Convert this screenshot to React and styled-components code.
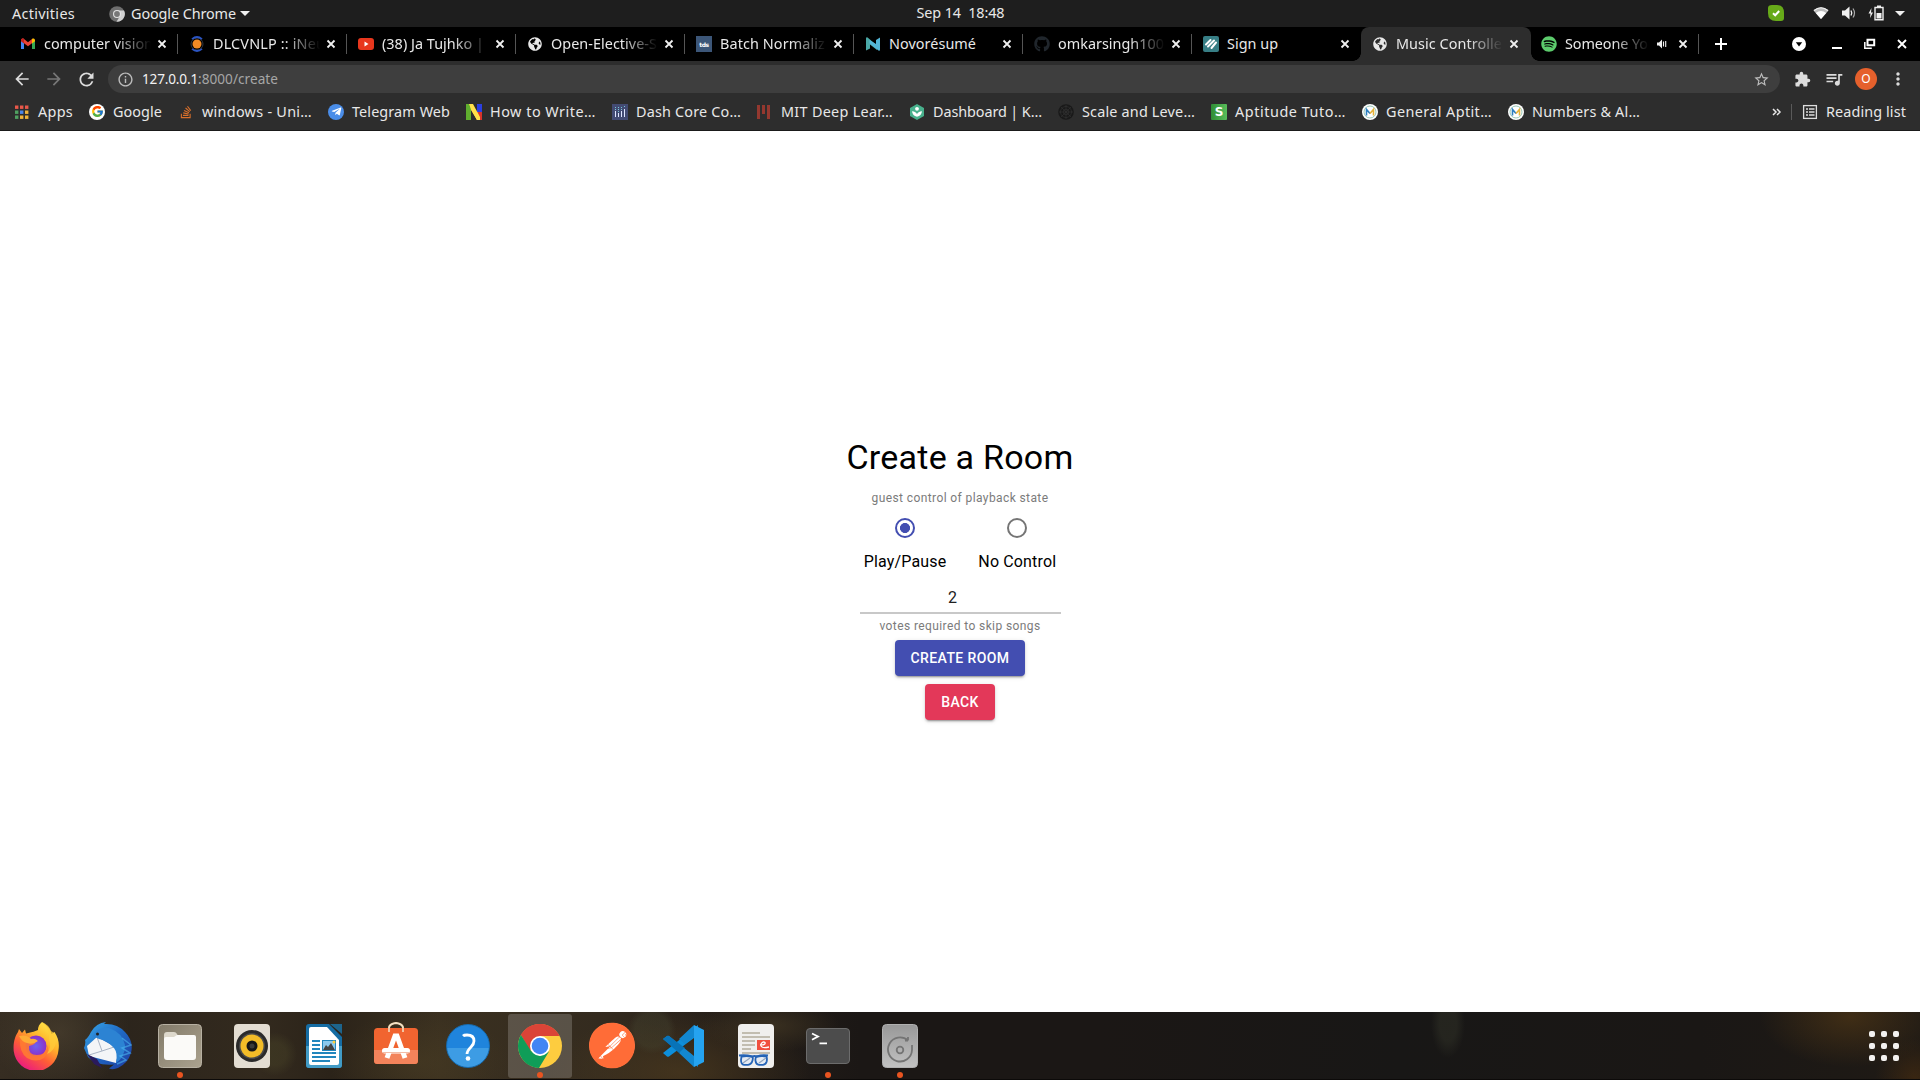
import React, { useLayoutEffect, useRef } from "react";
import styled, { createGlobalStyle, css } from "styled-components";
import { MdArrowBack, MdArrowForward, MdRefresh, MdInfoOutline, MdStarBorder, MdExtension, MdQueueMusic, MdMoreVert } from "react-icons/md";
import { FaStackOverflow, FaGithub, FaSpotify, FaTelegramPlane, FaGlobeAmericas } from "react-icons/fa";
import { FcGoogle } from "react-icons/fc";
import { SiPostman } from "react-icons/si";

const Global = createGlobalStyle`
  * { box-sizing: border-box; }
  body { margin: 0; background: #fff; overflow: hidden; font-family: "Noto Sans", "Open Sans", sans-serif; }
  svg { display: block; flex: none; }
`;

const Screen = styled.div`
  width: 1920px;
  height: 1080px;
  display: flex;
  flex-direction: column;
  overflow: hidden;
`;

/* ---------- text fitted to a fixed column ---------- */
const TextCell = styled.span`
  flex: none;
  display: block;
  width: ${(p) => p.$w}px;
  white-space: pre;
  font-size: ${(p) => p.$size || 14.4}px;
  line-height: 20px;
  color: ${(p) => p.$color || "#e8e8e8"};
  margin-left: ${(p) => p.$ml || 0}px;
`;

function Fit({ w, children, ...rest }) {
  const ref = useRef(null);
  useLayoutEffect(() => {
    const el = ref.current;
    el.style.letterSpacing = "0px";
    const natural = el.getBoundingClientRect().width;
    el.style.letterSpacing = `${(w - natural) / el.textContent.length}px`;
  }, [w]);
  return (
    <TextCell $w={w} {...rest}>
      <span ref={ref}>{children}</span>
    </TextCell>
  );
}

/* ---------- desktop bar ---------- */
const TopBar = styled.header`
  flex: none;
  height: 27px;
  background: #1e1e1e;
  display: flex;
  align-items: center;
  justify-content: space-between;
  padding: 0 15px 1px 12px;
`;
const BarGroup = styled.div`
  display: flex;
  align-items: center;
  width: ${(p) => p.$w || "auto"};
  padding-top: ${(p) => p.$pt || 0}px;
  justify-content: ${(p) => p.$end ? "flex-end" : "flex-start"};
`;
const Caret = styled.i`
  border: 5px solid transparent;
  border-top-color: #f0f0f0;
  border-bottom: 0;
  margin-left: ${(p) => p.$ml}px;
`;
const Gap = styled.span`
  flex: none;
  width: ${(p) => p.$w}px;
`;

/* ---------- tab strip ---------- */
const TabStrip = styled.nav`
  flex: none;
  height: 34px;
  background: #000;
  display: flex;
  align-items: center;
  padding-left: 9px;
`;
const Tab = styled.div`
  flex: none;
  width: 169px;
  height: 34px;
  display: flex;
  align-items: center;
  padding: 0 7px 0 11px;
  position: relative;
  ${(p) => p.$line && css`
    background: linear-gradient(#555, #555) right 7px / 1px 20px no-repeat;
  `}
  ${(p) => p.$active && css`
    background: #2d2d2d;
    border-radius: 8px 8px 0 0;
    width: 170px;
    margin-right: -1px;
    &::before, &::after {
      content: "";
      position: absolute;
      bottom: 0;
      width: 8px;
      height: 8px;
    }
    &::before { left: -8px; background: radial-gradient(circle at 0 0, transparent 7.5px, #2d2d2d 8px); }
    &::after { right: -8px; background: radial-gradient(circle at 100% 0, transparent 7.5px, #2d2d2d 8px); }
  `}
`;
const TabTitle = styled.div`
  flex: none;
  width: ${(p) => p.$w}px;
  margin: 0 ${(p) => p.$mr}px 0 8px;
  overflow: hidden;
  ${(p) => p.$fade && css`mask-image: linear-gradient(90deg, #000 calc(100% - 36px), transparent);`}
`;
const IconBox = styled.span`
  flex: none;
  width: 16px;
  height: 16px;
  display: flex;
  align-items: center;
  justify-content: center;
  color: ${(p) => p.$color || "#e8e8e8"};
`;
const Favicon = styled(IconBox)`
  background: ${(p) => p.$bg || "none"};
  border-radius: ${(p) => p.$r || 0}px;
`;
const SquareText = styled.b`
  font: 700 ${(p) => p.$size}px "DejaVu Sans", sans-serif;
  letter-spacing: ${(p) => p.$track || 0}px;
  color: #fff;
`;

/* ---------- toolbar ---------- */
const Toolbar = styled.div`
  flex: none;
  height: 34px;
  background: #2d2d2d;
  display: flex;
  align-items: center;
  padding: 2px 12px 0 12px;
`;
const ToolIcon = styled.span`
  flex: none;
  width: ${(p) => p.$w || 32}px;
  display: flex;
  justify-content: center;
  color: ${(p) => p.$color || "#dcdcdc"};
`;
const Omnibox = styled.div`
  flex: none;
  width: 1672px;
  height: 28px;
  border-radius: 14px;
  background: #3e3e3e;
  display: flex;
  align-items: center;
  justify-content: space-between;
  padding: 0 10px 0 9px;
  margin-right: 6px;
  color: #bdbdbd;
`;
const Avatar = styled.span`
  width: 22px;
  height: 22px;
  border-radius: 50%;
  background: #e5602c;
  color: #fff;
  font-size: 12px;
  line-height: 22px;
  text-align: center;
`;

/* ---------- bookmarks ---------- */
const Bookmarks = styled.div`
  flex: none;
  height: 36px;
  background: #2d2d2d;
  border-bottom: 1px solid #1a1a1a;
  display: flex;
  align-items: center;
  justify-content: space-between;
  padding: 0 14px 2px 13px;
`;
const Bookmark = styled.div`
  flex: none;
  display: flex;
  align-items: center;
  width: ${(p) => p.$w}px;
`;
const Rule = styled.i`
  width: 1px;
  height: 16px;
  background: #5a5a5a;
  margin: 0 10px 0 6px;
`;

/* ---------- page ---------- */
const Page = styled.main`
  flex: none;
  height: 881px;
  background: #fff;
  display: flex;
  flex-direction: column;
  align-items: center;
  padding-top: 305px;
  font-family: Roboto, sans-serif;
`;
const Title = styled.h4`
  margin: 0;
  font-weight: 400;
  font-size: 34px;
  line-height: 42px;
  letter-spacing: 0.00735em;
  color: #000;
`;
const Caption = styled.p`
  margin: ${(p) => p.$mt}px 0 0;
  font-size: 12px;
  line-height: 20px;
  letter-spacing: 0.03333em;
  color: #7b7b7b;
`;
const RadioRow = styled.div`
  display: flex;
  gap: 32px;
`;
const RadioOption = styled.label`
  display: flex;
  flex-direction: column;
  align-items: center;
  font-size: 16px;
  line-height: 24px;
  letter-spacing: 0.00938em;
  color: #000;
`;
const RadioMark = styled.span`
  width: 20px;
  height: 20px;
  margin: 10.4px 11px 11.6px;
  border-radius: 50%;
  border: 2px solid ${(p) => (p.$on ? "#434eb1" : "#757575")};
  background: ${(p) => (p.$on ? "radial-gradient(circle, #434eb1 4.7px, transparent 5.3px)" : "none")};
`;
const Field = styled.div`
  width: 201px;
  height: 33px;
  margin-top: 7px;
  padding-right: 15px;
  border-bottom: 2px solid #c8c8c8;
  text-align: center;
  font-size: 16px;
  line-height: 33px;
  color: #212121;
`;
const Button = styled.button`
  width: ${(p) => p.$w}px;
  height: 36px;
  margin: ${(p) => p.$mt}px 0 0;
  padding: 0;
  border: 0;
  border-radius: 4px;
  background: ${(p) => p.$bg};
  color: #fff;
  font: 500 14px/36px Roboto, sans-serif;
  letter-spacing: 0.02857em;
  box-shadow: 0 3px 1px -2px rgba(0,0,0,.2), 0 2px 2px 0 rgba(0,0,0,.14), 0 1px 5px 0 rgba(0,0,0,.12);
`;

/* ---------- dock ---------- */
const Dock = styled.footer`
  flex: none;
  height: 68px;
  display: flex;
  justify-content: space-between;
  align-items: flex-start;
  padding: 2px 20px 0 4px;
  border-bottom: 1px solid #0c0a09;
  background:
    radial-gradient(ellipse 90px 50px at 1850px 5px, rgba(78,54,22,.7), transparent),
    radial-gradient(ellipse 40px 40px at 1915px 66px, rgba(74,46,16,.6), transparent),
    radial-gradient(ellipse 17px 34px at 1448px 12px, rgba(40,40,33,.8) 50%, transparent),
    radial-gradient(ellipse 24px 24px at 652px 18px, rgba(70,70,50,.35) 70%, transparent),
    radial-gradient(ellipse 22px 22px at 275px 42px, rgba(75,70,40,.4) 50%, transparent),
    radial-gradient(ellipse 70px 60px at 60px 20px, rgba(92,80,58,.4), transparent),
    radial-gradient(ellipse 90px 50px at 420px 50px, rgba(80,66,36,.4), transparent),
    radial-gradient(ellipse 70px 26px at 770px 14px, rgba(70,58,36,.65), transparent),
    radial-gradient(ellipse 130px 60px at 680px 60px, rgba(76,58,30,.7), transparent),
    linear-gradient(90deg, #362d22 0, #2b241c 110px, #332a1e 260px, #2b2319 330px, #3a3020 440px, #342b1f 600px, #261f19 720px, #1b1715 860px, #1b1715 1100px, #181716 1400px, #1a1715 1700px, #1f1a15 1920px);
`;
const DockApps = styled.div`
  display: flex;
  gap: 8px;
`;
const DockTile = styled.div`
  width: 64px;
  height: 64px;
  border-radius: 3px;
  background: ${(p) => (p.$active ? "rgba(255,255,255,.18)" : "none")};
  display: flex;
  flex-direction: column;
  align-items: center;
  justify-content: space-between;
  padding-top: 8px;
`;
const RunDot = styled.i`
  width: 6px;
  height: 6px;
  border-radius: 50%;
  background: #e95420;
`;
const AppGrid = styled.div`
  display: grid;
  grid-template-columns: repeat(3, 6px);
  gap: 6px;
  padding-top: 17px;
  margin-right: 1px;
  i { width: 6px; height: 6px; border-radius: 2px; background: #f3f1ef; }
`;

/* ---------- drawings ---------- */
const Svg = ({ s = 16, v = 16, children, ...r }) => (
  <svg width={s} height={s} viewBox={`0 0 ${v} ${v}`} {...r}>{children}</svg>
);
const Globe = () => <FaGlobeAmericas size={14} />;
const Close = () => (
  <Svg><path d="M3.500 4.500l7 7M10.500 4.500l-7 7" stroke="#f0f0f0" strokeWidth="1.800" /></Svg>
);
const Plus = () => (
  <Svg s={18} v={18}><path d="M9 3v12M3 9h12" stroke="#fff" strokeWidth="2" /></Svg>
);
const Gmail = () => (
  <Svg>
    <path d="M1 4v9h3V7z" fill="#4285f4" />
    <path d="M15 4v9h-3V7z" fill="#34a853" />
    <path d="M1 4.500C1 2.600 3 2.200 4 3l4 3.200L12 3v4.200l-4 3-4-3L1 5z" fill="#ea4335" />
    <path d="M12 3c1-.8 3-.4 3 1.500V5.200l-3 2.200z" fill="#fbbc04" />
    <path d="M1 4.500V5.200l3 2.200V3C3 2.200 1 2.600 1 4.500z" fill="#c5221f" />
  </Svg>
);
const Inet = () => (
  <Svg>
    <circle cx="8" cy="8" r="6" fill="none" stroke="#33383f" strokeWidth="1" />
    <circle cx="8" cy="8" r="4.500" fill="#f28a24" />
    <path d="M3 3.200Q8-1.200 13 3.200M3 12.800Q8 17.200 13 12.800" fill="none" stroke="#2b55c4" strokeWidth="1.700" />
  </Svg>
);
const Youtube = () => (
  <Svg><rect y="2" width="16" height="12" rx="3" fill="#e8371d" /><path d="M6.500 5.500v5L10.500 8z" fill="#fff" /></Svg>
);
const Novo = () => (
  <Svg><path d="M1 14.500V2.500Q1 1 2.600 1.400L12 9.500V14L5 8.500v4z" fill="#4aa8a6" /><path d="M15 1.500v12Q15 15 13.500 14.600L4.500 7.500V4L11 8V4z" fill="#54b7d8" /></Svg>
);
const Sign = () => (
  <Svg><g stroke="#fff" strokeWidth="2" strokeLinecap="round"><path d="M3 8.500L7.500 4M5 10.500L11 4.500M8.500 12L13 6.500" /></g></Svg>
);
const Apps = () => {
  const c = ["#e8584a", "#e8584a", "#e8584a", "#4fa060", "#4a86e8", "#f0b43a", "#4fa060", "#f0b43a", "#f0b43a"];
  return <Svg>{c.map((f, i) => <rect key={i} x={2 + (i % 3) * 5} y={1.500 + Math.floor(i / 3) * 5} width="3.400" height="3.400" fill={f} />)}</Svg>;
};
const NLogo = () => (
  <Svg><path d="M0 0h5v16H0z" fill="#5fae2e" /><path d="M11 0h5v8h-5z" fill="#2b3fe0" /><path d="M11 8h5v8h-5z" fill="#d8342a" /><path d="M3 0h3l8 16h-3L5 5z" fill="#ffe14a" /><path d="M4 0h3l7 13v3h-3L5 6z" fill="#ffe14a" /></Svg>
);
const Dash = () => (
  <Svg><g stroke="#dfe5ff" strokeWidth="1"><path d="M3.500 7v6M6.500 9v4M9.500 7v6M12.500 5v8" /></g><g stroke="#75c7d8" strokeWidth="1" strokeDasharray="1 1"><path d="M3.500 3v3M6.500 3v5M9.500 3v3M12.500 2v2" /></g></Svg>
);
const Mit = () => (
  <Svg><path d="M1 1h3v14H1zM6 1h3v9H6zM11 1h3v14h-3z" fill="#94382f" /></Svg>
);
const Hex = () => (
  <Svg><path d="M8 0l7 4v8l-7 4-7-4V4z" fill="#48b08c" /><circle cx="8" cy="4.800" r="1.900" fill="#fff" /><path d="M3 7.200q4 .3 5 3 1-2.700 5-3-.5 4.500-5 5.600-4.500-1.100-5-5.600z" fill="#fff" /></Svg>
);
const Web = () => (
  <Svg><circle cx="8" cy="8" r="7.800" fill="#191919" /><g fill="none" stroke="#303030" strokeWidth=".7"><circle cx="8" cy="8" r="5.500" /><circle cx="8" cy="8" r="2.800" /><path d="M8 1v14M1 8h14M3 3l10 10M13 3L3 13" /></g></Svg>
);
const MLogo = () => (
  <Svg><circle cx="8" cy="8" r="8" fill="#fff" /><circle cx="8" cy="8" r="6" fill="none" stroke="#7cb8a2" strokeWidth=".8" /><path d="M4.500 11.500v-6L8 9.500" fill="none" stroke="#2d7fc0" strokeWidth="1.600" /><path d="M8 9.500l3.500-4v6" fill="none" stroke="#e5b33a" strokeWidth="1.600" /></Svg>
);
const GreyChrome = () => (
  <Svg><circle cx="8" cy="8" r="7.800" fill="#6f6f6f" /><path d="M8 4.500h7A7.800 7.800 0 0 1 7.500 15.800L11 10z" fill="#d0d0d0" /><circle cx="8" cy="8" r="4" fill="#e2e2e2" /><circle cx="8" cy="8" r="2.900" fill="#777" /></Svg>
);
const ReadingIcon = () => (
  <Svg fill="none" stroke="#dcdcdc" strokeWidth="1.300"><rect x="1.600" y="1.600" width="12.800" height="12.800" /><path d="M4 5h2M7 5h5.500M4 8h2M7 8h5.500M4 11h2M7 11h5.500" strokeWidth="1.600" /></Svg>
);
const Speaker = () => (
  <Svg s={12} v={12} fill="#f0f0f0"><path d="M1 4.500h2L6 1.500v9L3 7.500H1z" /><path d="M7.500 3.500v5M9.700 3v6" stroke="#f0f0f0" strokeWidth="1.100" /></Svg>
);
const Skype = () => (
  <Svg><path d="M0 3Q0 0 4 0h5q7 0 7 8v5q0 3-3 3H8Q0 16 0 8z" fill="#67aa19" /><path d="M5 8.300l2.200 2L11.200 6" fill="none" stroke="#fff" strokeWidth="2" /></Svg>
);
const Wifi = () => (
  <Svg><path d="M8 14L.5 5.500Q8-.8 15.500 5.500z" fill="#bdbdbd" /><path d="M8 14L2.800 8Q8 4 13.200 8z" fill="#fff" /><path d="M1 5.500Q8 0 15 5.500" fill="none" stroke="#f0f0f0" strokeWidth="1.200" /></Svg>
);
const Volume = () => (
  <Svg fill="none" stroke="#f0f0f0"><path d="M0 5.500h3L7.500 1.500v13L3 10.500H0z" fill="#f0f0f0" stroke="none" /><path d="M9 5.500q1.500 2.500 0 5" strokeWidth="1.400" /><path d="M11 3.500q3 4.500 0 9" stroke="#aaa" strokeWidth="1.200" /></Svg>
);
const Battery = () => (
  <Svg fill="#f0f0f0"><path d="M3.500 3L.5 8.500h2L2 13l3-5.500H3z" /><path d="M7 2.500h8v12.200H7z" fill="none" stroke="#f0f0f0" strokeWidth="1.400" /><path d="M9 .5h4v2H9zM8.500 8h5v5.500h-5z" /></Svg>
);

const D = ({ children }) => <Svg s={48} v={48}>{children}</Svg>;
const Firefox = () => (
  <D>
    <defs>
      <linearGradient id="ff" x1=".85" y1="0" x2=".2" y2="1"><stop offset="0" stopColor="#fff04f" /><stop offset=".35" stopColor="#ffb52b" /><stop offset=".62" stopColor="#ff5f35" /><stop offset="1" stopColor="#e8118a" /></linearGradient>
      <radialGradient id="fp"><stop offset="0" stopColor="#6b63f0" /><stop offset="1" stopColor="#8d2fc6" /></radialGradient>
    </defs>
    <path d="M30 0c6 4 9 8 9.500 12l3-2c4 6 5 12 4 18a22.500 22.500 0 0 1-44.800 1C1 21 3 14 6 10l1-3 3 4 3-3.500 1 4q9-2 12-3.500Q26 3 30 0z" fill="url(#ff)" />
    <circle cx="24" cy="24" r="10.500" fill="url(#fp)" />
    <path d="M8 17q8 5 15 2 2 3-6 5-1 9 8 9 9 0 11-10 1 8-4 13-8 5-17 0-8-6-7-19z" fill="#ff7a32" opacity=".9" />
    <path d="M30 0q8 7 7 17 3 8-2 15 9-4 9-14 0-7-5-9Q37 3 30 0z" fill="#ffcc39" opacity=".75" />
    <path d="M7 14q8-2 12 3 4-1 7 2-5 4-11 2-5-1-8-7z" fill="#ffad35" />
  </D>
);
const Thunderbird = () => (
  <D>
    <defs><linearGradient id="tb" x1="0" y1="0" x2="1" y2="1"><stop offset="0" stopColor="#38a8e8" /><stop offset=".5" stopColor="#1f68c4" /><stop offset="1" stopColor="#203a9e" /></linearGradient></defs>
    <path d="M7 10Q12 1 22 0l-2 2q13-1 21 8 9 9 6 21-3 10-13 15-5 2-9 .5l5-4Q12 44 4 35L0 26q2-5 1-8 3-2 6-8z" fill="url(#tb)" />
    <path d="M3 24l10-9 22 12-3 14L5 34z" fill="#f4f5f7" />
    <path d="M13 15l5 14 15-5M18 29L5 33" fill="none" stroke="#aab4c4" strokeWidth="1" />
    <path d="M9 14Q14 4 25 6q14 5 16 17 0 12-9 18 2-10-2-15-7-8-15-9z" fill="#2c83d3" />
    <path d="M38 16l9 7-9 3 8 5-10 3 6 4-9 4" fill="none" stroke="#49b4ee" strokeWidth="1.500" opacity=".6" />
    <circle cx="13.500" cy="12" r="1.500" fill="#222" /><path d="M3 32l7 10 8 4-5-9z" fill="#2a1a5c" />
  </D>
);
const Files = () => (
  <D><defs><linearGradient id="fi" x2="1" y2="1"><stop stopColor="#827a69" /><stop offset="1" stopColor="#aba28f" /></linearGradient></defs>
    <rect x="2.500" y="2.500" width="43" height="43" rx="4" fill="url(#fi)" stroke="#b7b0a2" /><path d="M8 13q0-3 3-3h7q2 0 3 2l1 2h10v10H8z" fill="#ddd8cc" /><path d="M8 17q0-2 2-2h8l3-2h17q2 0 2 2v20q0 3-3 3H11q-3 0-3-3z" fill="#fbfaf8" /></D>
);
const Rhythm = () => (
  <D><rect x="6" y="2" width="36" height="44" rx="4" fill="#e3ddd2" /><circle cx="24" cy="24" r="16" fill="#2a2a2a" /><circle cx="24" cy="24" r="13" fill="#4a4a4a" /><circle cx="24" cy="24" r="11.500" fill="#f2bc28" /><circle cx="24" cy="24" r="5.500" fill="#161616" /><circle cx="24" cy="24" r="2.500" fill="#3a3a3a" /></D>
);
const Writer = () => (
  <D><path d="M9 2h20l13 13v28q0 3-3 3H9q-3 0-3-3V5q0-3 3-3z" fill="#156ca3" /><path d="M6 24h36v19q0 3-3 3H9q-3 0-3-3z" fill="#419bc6" /><path d="M30 2h12v10z" fill="#1d648c" /><path d="M9 7q0-2 2-2h16l12 13v23q0 2-2 2H11q-2 0-2-2z" fill="#fff" /><path d="M12 19h8M12 23h8M12 27h8M12 31h24M12 35h24M12 39h18" stroke="#2286bd" strokeWidth="2" /><path d="M22 18h14v11H22z" fill="#2286bd" /><path d="M23 19h12v9H23z" fill="#8cc9ee" /><path d="M23 28l3-5 2 2 3-4 4 7z" fill="#444" /><circle cx="34" cy="20" r="1.500" fill="#ffd03a" /></D>
);
const Software = () => (
  <D><path d="M17 10V6q0-4 7-5 7 1 7 5v4" fill="none" stroke="#e9cfa8" strokeWidth="2" /><rect x="2" y="6" width="44" height="36" rx="3.500" fill="#f16430" /><path d="M2 28h44v10.500q0 3.500-3.500 3.500h-37Q2 42 2 38.500z" fill="#f3835b" /><path d="M17 10V6q0-4 7-5 7 1 7 5v4" fill="none" stroke="#f3e2c6" strokeWidth="1.500" /><path d="M15 36l8-22h2l8 22" fill="none" stroke="#fff" strokeWidth="5" /><rect x="10" y="26" width="28" height="5.500" rx="2.700" fill="#fff" /><path d="M10 30.500h28" stroke="#f2bda8" /></D>
);
const HelpMark = styled.span`
  width: 44px;
  height: 44px;
  margin-top: 2px;
  border-radius: 50%;
  border: 1px solid #176cb0;
  background: linear-gradient(#1f84dc 54%, #3d9ce4 54%);
  display: flex;
  align-items: center;
  justify-content: center;
`;
const Help = () => (
  <HelpMark><Svg s={42} v={42}><path d="M16 11q1-1 4-1 7 0 7 6 0 3-3 6-4 4-4 7" fill="none" stroke="#fff" strokeWidth="2.800" /><circle cx="21" cy="33.500" r="2.300" fill="#fff" /></Svg></HelpMark>
);
const Chrome = () => (
  <D><circle cx="24" cy="24" r="22" fill="#fdcc3f" /><path d="M24 24L4.950 13A22 22 0 0 1 43.050 13H24z" fill="#db4437" /><path d="M24 2A22 22 0 0 1 43.400 14H24L14 29 4.950 13A22 22 0 0 1 24 2z" fill="#db4437" /><path d="M4.950 13A22 22 0 0 0 23 46L33 29.500 24 34 15 29z" fill="#0f9d58" /><circle cx="24" cy="24" r="10" fill="#fff" /><circle cx="24" cy="24" r="8.300" fill="#4285f4" /></D>
);
const Postman = () => (
  <D><circle cx="24" cy="23.500" r="22.500" fill="#fff" /><g transform="translate(1 .5)"><SiPostman size={46} color="#ff6c37" /></g></D>
);
const Code = () => (
  <D><path d="M3 17l4-3q1-.6 2 0L38 38v7z" fill="#0b83cf" /><path d="M3 31l4 3.500q1 .6 2 0L38 13V3z" fill="#0e8fdb" /><path d="M3 17l4-3q1-.6 2 0L25 26l-6 5z" fill="#0873b8" /><path d="M34 3l10 5v32l-10 5V3z" fill="#25a3f0" /><path d="M34 3L19 17l6 5 9-7zM34 45L19 31l5-5 10 8z" fill="#1287d0" /></D>
);
const Evince = () => (
  <D><rect x="6" y="2" width="36" height="44" rx="4" fill="#f0efed" /><path d="M10 11h18M10 15h28M10 19h13M10 23h13M10 27h9M10 31h28" stroke="#c2bdb0" strokeWidth="2" /><path d="M25 18h13v10H25z" fill="#f0503f" /><path d="M28 23q6 0 5-2.500-2-1.500-4 1.500-1 5 8 3" fill="none" stroke="#fff" strokeWidth="1.300" /><g fill="#e4eaf2" stroke="#2463b6" strokeWidth="1.800"><path d="M9.500 34.500q5-1 10 0 2 0 1 4-1 4-4.500 4.300h-4Q9 42.500 9 38zM24.500 34.500q5-1 10 0 .8 2 .2 5-.7 3-3.700 3.300h-4q-3-.3-3.500-4-.4-3 1-4.300z" /></g><path d="M11 41l7-5M27 41l7-5" stroke="#8fa3bd" strokeWidth="1.200" /><path d="M7 33.500q7-1 13 1 2.500-.8 5 0 5-2 11-1" fill="none" stroke="#2463b6" strokeWidth="2" /></D>
);
const TermScreen = styled.div`
  width: 44px;
  height: 36px;
  margin: 6px 0;
  border-radius: 4px;
  border: 1px solid #6c6c6c;
  background: #4c4c4c;
`;
const Term = () => (
  <TermScreen><Svg s={42} v={42} fill="none" stroke="#fff" strokeWidth="1.800"><path d="M5 4.500l6 3-6 3.200M12.500 14.300H20" /></Svg></TermScreen>
);
const Disk = () => (
  <D><defs><linearGradient id="dk" x2="0" y2="1"><stop stopColor="#989898" /><stop offset="1" stopColor="#c2c2c2" /></linearGradient></defs><rect x="6.500" y="2.500" width="35" height="43" rx="4" fill="url(#dk)" stroke="#b0b0b0" /><g fill="none" stroke="#747474" strokeWidth="1.800"><path d="M32 18.500A12 12 0 1 0 36 28V23M32 18.500h-3M32 18.500V15" /><circle cx="24" cy="28" r="3.300" /></g></D>
);

/* ---------- data ---------- */
const tabs = [
  { icon: <Gmail />, text: "computer vision", w: 109, fade: 1 },
  { icon: <Inet />, text: "DLCVNLP :: iNeu", w: 112, fade: 1 },
  { icon: <Youtube />, text: "(38) Ja Tujhko |", w: 102, fade: 1 },
  { icon: <Globe />, text: "Open-Elective-S", w: 106, fade: 1 },
  { icon: <SquareText $size={6} $track={-0.4}>tds</SquareText>, bg: "#3c5678", text: "Batch Normaliz", w: 105, fade: 1 },
  { icon: <Novo />, text: "Novorésumé", w: 87 },
  { icon: <FaGithub size={16} />, color: "#20262c", text: "omkarsingh100", w: 106, fade: 1 },
  { icon: <Sign />, bg: "#377e85", r: 2, text: "Sign up", w: 51 },
  { icon: <Globe />, text: "Music Controlle", w: 106, fade: 1, active: 1 },
  { icon: <FaSpotify size={16} />, color: "#5ccb6c", text: "Someone Yo", w: 83, fade: 1, audio: 1 },
];

const marks = [
  { icon: <Apps />, text: "Apps", w: 35, ml: 9, step: 76 },
  { icon: <FcGoogle size={13} />, bg: "#fff", r: 8, text: "Google", w: 49, step: 89 },
  { icon: <FaStackOverflow size={14} />, color: "#d9702c", text: "windows - Uni…", w: 110, step: 150 },
  { icon: <FaTelegramPlane size={11} />, color: "#fff", bg: "#4a8de8", r: 8, text: "Telegram Web", w: 98, step: 138 },
  { icon: <NLogo />, text: "How to Write…", w: 106, step: 146 },
  { icon: <Dash />, bg: "#434b73", text: "Dash Core Co…", w: 105, step: 144 },
  { icon: <Mit />, text: "MIT Deep Lear…", w: 112, ml: 9, step: 153 },
  { icon: <Hex />, text: "Dashboard | K…", w: 109, step: 149 },
  { icon: <Web />, text: "Scale and Leve…", w: 113, step: 153 },
  { icon: <SquareText $size={12}>S</SquareText>, bg: "linear-gradient(90deg,#2f8d36,#58bd5a)", r: 1, text: "Aptitude Tuto…", w: 111, step: 151 },
  { icon: <MLogo />, text: "General Aptit…", w: 106, step: 146 },
  { icon: <MLogo />, text: "Numbers & Al…", w: 108, step: 146 },
];

const dock = [
  [Firefox], [Thunderbird], [Files, 1], [Rhythm], [Writer], [Software], [Help], [Chrome, 1, 1], [Postman], [Code], [Evince], [Term, 1], [Disk, 1],
];

function TabItem({ t, i }) {
  return (
    <Tab $active={t.active} $line={!t.active && i !== 7}>
      <Favicon $bg={t.bg} $r={t.r} $color={t.color}>{t.icon}</Favicon>
      <TabTitle $w={t.audio ? 84 : 107} $mr={t.audio ? 7 : 4} $fade={t.fade}><Fit w={t.w}>{t.text}</Fit></TabTitle>
      {t.audio && <><Speaker /><Gap $w={8} /></>}
      <IconBox><Close /></IconBox>
    </Tab>
  );
}

export default function App() {
  return (
    <Screen>
      <Global />
      <TopBar>
        <BarGroup $w="500px" $pt={1}>
          <Fit w={63}>Activities</Fit>
          <Gap $w={34} />
          <GreyChrome />
          <Fit w={105} $ml={6}>Google Chrome</Fit>
          <Caret $ml={4} />
        </BarGroup>
        <Fit w={88} $ml={4}>{"Sep 14  18:48"}</Fit>
        <BarGroup $w="500px" $end>
          <Skype /><Gap $w={29} />
          <Wifi /><Gap $w={13} />
          <Volume /><Gap $w={10} />
          <Battery />
          <Caret $ml={11} />
        </BarGroup>
      </TopBar>

      <TabStrip>
        {tabs.map((t, i) => <TabItem key={t.text} t={t} i={i} />)}
        <Gap $w={13} />
        <Plus />
        <Gap $w={61} />
        <Svg><circle cx="8" cy="8" r="7" fill="#fff" /><path d="M4.800 6.200h6.400L8 10.500z" fill="#000" /></Svg>
        <Gap $w={22} />
        <Svg><path d="M3 12h10" stroke="#fff" strokeWidth="2" /></Svg>
        <Gap $w={16} />
        <Svg fill="none" stroke="#fff" strokeWidth="1.500"><path d="M6.500 3.700h6.700v5.500H6.500z" strokeWidth="2" /><path d="M3.800 6v6.300h7" /></Svg>
        <Gap $w={17} />
        <Svg><path d="M4 4l8 8M12 4l-8 8" stroke="#fff" strokeWidth="1.900" /></Svg>
      </TabStrip>

      <Toolbar>
        <ToolIcon $w={20}><MdArrowBack size={20} /></ToolIcon>
        <ToolIcon $w={44} $color="#777"><MdArrowForward size={20} /></ToolIcon>
        <ToolIcon $w={20}><MdRefresh size={21} /></ToolIcon>
        <Gap $w={12} />
        <Omnibox>
          <BarGroup>
            <MdInfoOutline size={17} />
            <Fit w={56} $size={13.6} $ml={8} $color="#f2f2f2">127.0.0.1</Fit>
            <Fit w={80} $size={13.6} $color="#a6a6a6">:8000/create</Fit>
          </BarGroup>
          <MdStarBorder size={17} />
        </Omnibox>
        <ToolIcon><MdExtension size={17} /></ToolIcon>
        <ToolIcon><MdQueueMusic size={20} /></ToolIcon>
        <ToolIcon><Avatar>O</Avatar></ToolIcon>
        <ToolIcon><MdMoreVert size={20} /></ToolIcon>
      </Toolbar>

      <Bookmarks>
        <BarGroup>
          {marks.map((m) => (
            <Bookmark key={m.text} $w={m.step}>
              <Favicon $bg={m.bg} $r={m.r} $color={m.color}>{m.icon}</Favicon>
              <Fit w={m.w} $ml={m.ml || 8}>{m.text}</Fit>
            </Bookmark>
          ))}
        </BarGroup>
        <BarGroup>
          <Svg fill="none" stroke="#e8e8e8" strokeWidth="1.500"><path d="M4 5L7 8l-3 3M8 5l3 3-3 3" /></Svg>
          <Rule />
          <ReadingIcon />
          <Fit w={80} $ml={8}>Reading list</Fit>
        </BarGroup>
      </Bookmarks>

      <Page>
        <Title>Create a Room</Title>
        <Caption $mt={10}>guest control of playback state</Caption>
        <RadioRow>
          <RadioOption><RadioMark $on />Play/Pause</RadioOption>
          <RadioOption><RadioMark />No Control</RadioOption>
        </RadioRow>
        <Field>2</Field>
        <Caption $mt={2}>votes required to skip songs</Caption>
        <Button $w={130} $mt={3.6} $bg="#434eb1">CREATE ROOM</Button>
        <Button $w={70} $mt={8} $bg="#e33859">BACK</Button>
      </Page>

      <Dock>
        <DockApps>
          {dock.map(([Icon, running, active], i) => (
            <DockTile key={i} $active={active}>
              <Icon />
              {running && <RunDot />}
            </DockTile>
          ))}
        </DockApps>
        <AppGrid>{Array.from({ length: 9 }, (_, i) => <i key={i} />)}</AppGrid>
      </Dock>
    </Screen>
  );
}
